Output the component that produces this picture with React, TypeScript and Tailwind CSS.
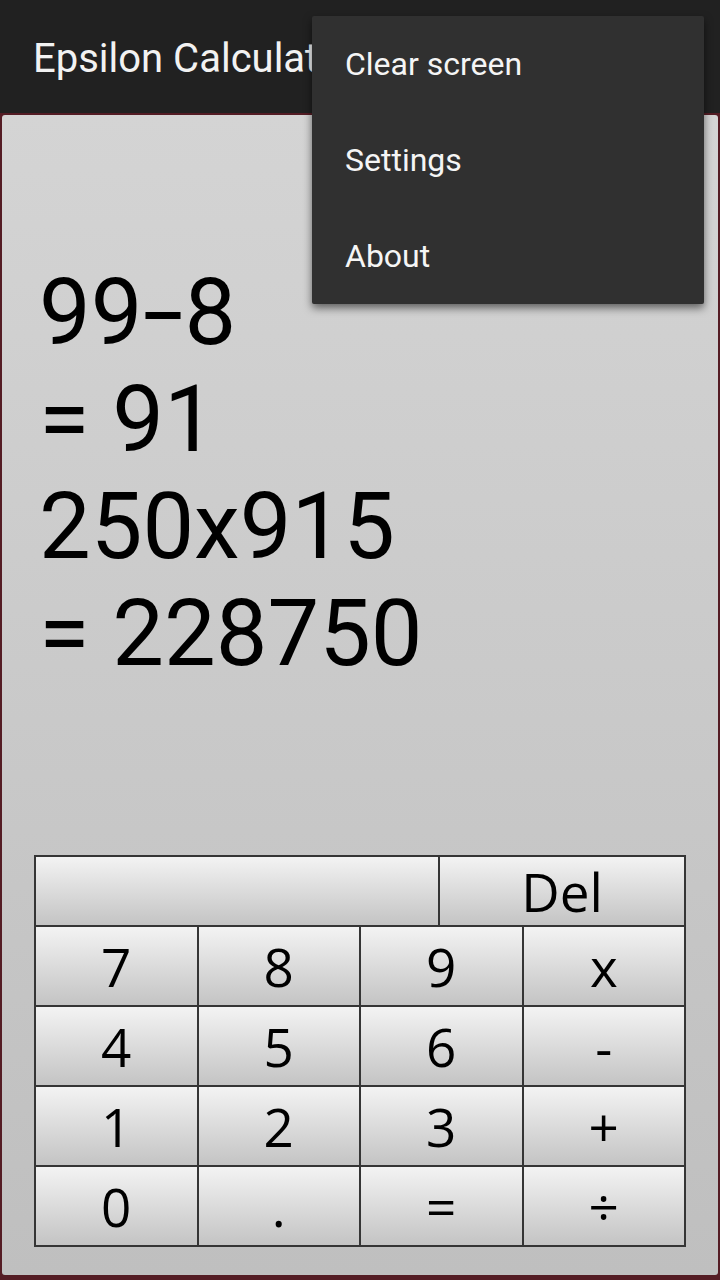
import React from "react";

const keys = ["7", "8", "9", "x", "4", "5", "6", "-", "1", "2", "3", "+", "0", ".", "=", "÷"];

const menuItems = ["Clear screen", "Settings", "About"];

function Key({ label, className = "" }: { label: string; className?: string }) {
  return (
    <button
      type="button"
      className={`flex items-center justify-center bg-gradient-to-b from-[#f3f3f3] to-[#c4c4c4] text-black text-[53px] leading-none font-['Open_Sans',sans-serif] ${className}`}
    >
      {label}
    </button>
  );
}

export default function App() {
  return (
    <div className="relative w-[720px] h-[1280px] overflow-hidden bg-[#212121] flex flex-col font-['Roboto',sans-serif]">
      {/* Action bar */}
      <div className="h-[113px] shrink-0 flex items-center pl-[33px] pt-[4px]">
        <h1 className="text-[40px] text-[#f2f2f2] whitespace-nowrap">Epsilon Calculator</h1>
      </div>

      {/* Calculator body */}
      <div className="flex-1 bg-[#541c24] px-[2px] pt-[2px] pb-[5px] flex">
        <div className="flex-1 rounded-[3px] bg-gradient-to-b from-[#d4d4d4] to-[#bfbfbf] flex flex-col px-[32px] pb-[28px]">
          {/* Display */}
          <div className="flex-1 pt-[144px] pl-[5px] text-[92px] leading-[107px] text-black whitespace-nowrap">
            <div>
              99<span className="inline-block w-[42px] text-center scale-x-[1.6]">-</span>8
            </div>
            <div>= 91</div>
            <div>250x915</div>
            <div>= 228750</div>
          </div>

          {/* Keypad */}
          <div className="bg-[#353535] p-[2px] flex flex-col gap-[2px]">
            <div className="flex gap-[2px] h-[68px]">
              <Key label="" className="w-[402px]" />
              <Key label="Del" className="flex-1" />
            </div>
            <div className="grid grid-cols-4 gap-[2px]">
              {keys.map((k) => (
                <Key key={k} label={k} className="h-[78px]" />
              ))}
            </div>
          </div>
        </div>
      </div>

      {/* Overflow menu */}
      <div className="absolute left-[312px] top-[16px] w-[392px] bg-[#303030] rounded-[2px] shadow-[0_4px_8px_rgba(0,0,0,0.55)]">
        {menuItems.map((item) => (
          <div key={item} className="h-[96px] flex items-center pl-[33px] text-[32px] text-[#f5f5f5]">
            {item}
          </div>
        ))}
      </div>
    </div>
  );
}
